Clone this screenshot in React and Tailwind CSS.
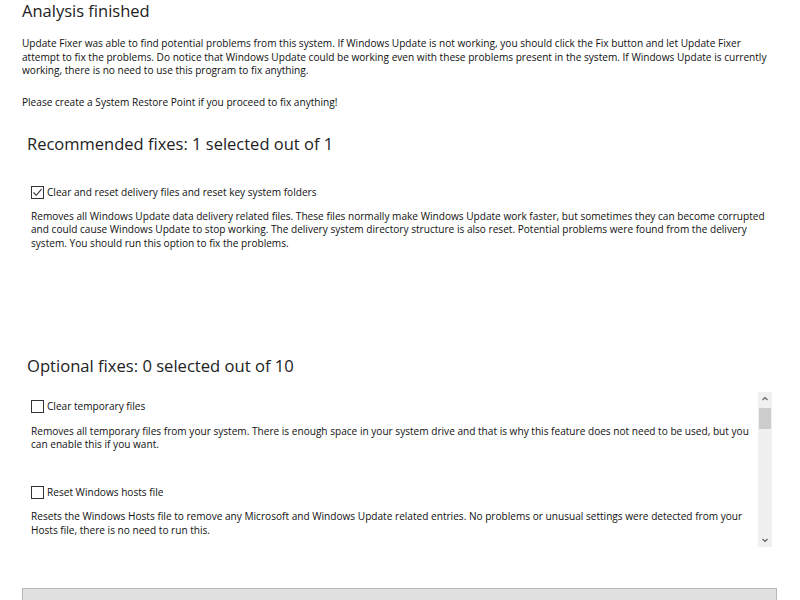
import React from "react";

const font = { fontFamily: '"Open Sans", "Noto Sans", sans-serif' };

function Box({ checked }) {
  return (
    <span className="inline-flex h-[13px] w-[13px] shrink-0 items-center justify-center border border-[#333] bg-white">
      {checked && (
        <svg width="11" height="11" viewBox="0 0 11 11">
          <path d="M1.5 5.5 L4.3 8.3 L9.5 2.2" fill="none" stroke="#333" strokeWidth="1.1" />
        </svg>
      )}
    </span>
  );
}

function Lines({ lines, className = "" }) {
  return (
    <div className={className}>
      {lines.map((l, i) => (
        <div key={i} className="whitespace-nowrap">{l}</div>
      ))}
    </div>
  );
}

export default function App() {
  return (
    <div className="relative h-[600px] w-[800px] overflow-hidden bg-white text-[10.1px] leading-[13.5px] text-[#111]" style={font}>
      <div className="pl-[22px] pt-[0px] text-[16.5px] leading-[22px] text-[#222]">Analysis finished</div>
      <Lines
        className="mt-[15px] pl-[22px]"
        lines={[
          "Update Fixer was able to find potential problems from this system. If Windows Update is not working, you should click the Fix button and let Update Fixer",
          "attempt to fix the problems. Do notice that Windows Update could be working even with these problems present in the system. If Windows Update is currently",
          "working, there is no need to use this program to fix anything.",
        ]}
      />
      <div className="mt-[18px] pl-[22px]">Please create a System Restore Point if you proceed to fix anything!</div>

      <div className="mt-[24px] pl-[27px] text-[16.5px] leading-[22px] text-[#222]">Recommended fixes: 1 selected out of 1</div>
      <div className="mt-[31px] flex items-center gap-[3px] pl-[31px]">
        <Box checked />
        <span>Clear and reset delivery files and reset key system folders</span>
      </div>
      <Lines
        className="mt-[10px] pl-[31px]"
        lines={[
          "Removes all Windows Update data delivery related files. These files normally make Windows Update work faster, but sometimes they can become corrupted",
          "and could cause Windows Update to stop working. The delivery system directory structure is also reset. Potential problems were found from the delivery",
          "system. You should run this option to fix the problems.",
        ]}
      />

      <div className="mt-[105px] pl-[27px] text-[16.6px] leading-[22px] text-[#222]">Optional fixes: 0 selected out of 10</div>

      <div className="mt-[15px] flex h-[155px] pl-[31px] pr-[28px]">
        <div className="flex-1 overflow-hidden pt-[8px]">
          <div className="flex items-center gap-[3px]">
            <Box />
            <span>Clear temporary files</span>
          </div>
          <Lines
            className="mt-[11px]"
            lines={[
              "Removes all temporary files from your system. There is enough space in your system drive and that is why this feature does not need to be used, but you",
              "can enable this if you want.",
            ]}
          />
          <div className="mt-[34px] flex items-center gap-[3px]">
            <Box />
            <span>Reset Windows hosts file</span>
          </div>
          <Lines
            className="mt-[11px]"
            lines={[
              "Resets the Windows Hosts file to remove any Microsoft and Windows Update related entries. No problems or unusual settings were detected from your",
              "Hosts file, there is no need to run this.",
            ]}
          />
        </div>
        <div className="flex w-[14px] flex-col items-center bg-[#f0f0f0]">
          <svg width="14" height="14" viewBox="0 0 14 14" className="shrink-0">
            <path d="M4.5 8 L7 5.5 L9.5 8" fill="none" stroke="#606060" strokeWidth="1.2" />
          </svg>
          <div className="mt-[2px] h-[21px] w-[12px] bg-[#cdcdcd]" />
          <div className="flex-1" />
          <svg width="14" height="14" viewBox="0 0 14 14" className="shrink-0">
            <path d="M4.5 6 L7 8.5 L9.5 6" fill="none" stroke="#606060" strokeWidth="1.2" />
          </svg>
        </div>
      </div>

      <div className="absolute left-[22px] top-[588px] h-[30px] w-[755px] border border-[#b8b8b8] bg-[#e1e1e1]" />
    </div>
  );
}
